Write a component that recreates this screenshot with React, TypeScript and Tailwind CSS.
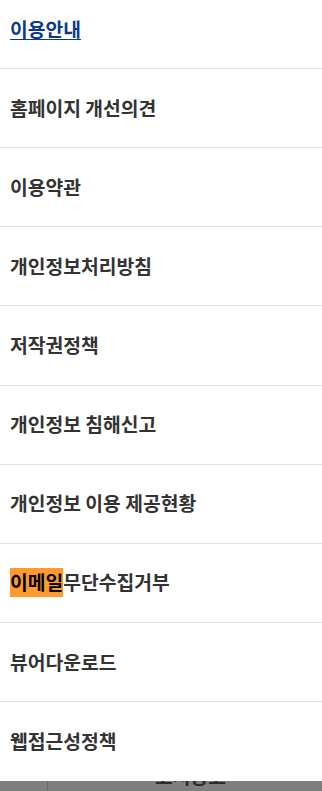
const ITEMS = [
  "홈페이지 개선의견",
  "이용약관",
  "개인정보처리방침",
  "저작권정책",
  "개인정보 침해신고",
  "개인정보 이용 제공현황",
];

const TAIL = ["뷰어다운로드", "웹접근성정책"];

const FONT = { fontFamily: '"Noto Sans CJK KR", "Noto Sans", sans-serif' };

function Row({ children, last = false }: { children: React.ReactNode; last?: boolean }) {
  return (
    <li
      className={`flex h-[79.15px] items-center pl-[10px] text-[19.3px] font-bold text-[#333] ${
        last ? "" : "border-b border-[#e3e3e3]"
      }`}
    >
      {children}
    </li>
  );
}

export default function App() {
  return (
    <div className="flex h-[791px] w-[322px] flex-col overflow-hidden bg-white" style={FONT}>
      <ul className="flex flex-col">
        <li className="flex h-[69px] items-center border-b border-[#e3e3e3] pb-[10px] pl-[10px]">
          <a href="#" className="text-[19.3px] font-bold text-[#0b3a8c] underline underline-offset-2">
            이용안내
          </a>
        </li>
        {ITEMS.map((item) => (
          <Row key={item}>{item}</Row>
        ))}
        <Row>
          <span className="inline-block bg-[#ff9a2e] leading-[29px] text-black">이메일</span>
          <span>무단수집거부</span>
        </Row>
        {TAIL.map((item, i) => (
          <Row key={item} last={i === TAIL.length - 1}>
            {item}
          </Row>
        ))}
      </ul>
      <div className="flex h-[12px] shrink-0 overflow-hidden bg-[#7f7f7f]">
        <div className="w-[48px] shrink-0 border-r border-[#6a6a6a]" />
        <span className="-mt-[14px] ml-[107px] text-[19.3px] leading-[19px] font-bold text-[#2b2b2b]">
          고시공고
        </span>
      </div>
    </div>
  );
}
